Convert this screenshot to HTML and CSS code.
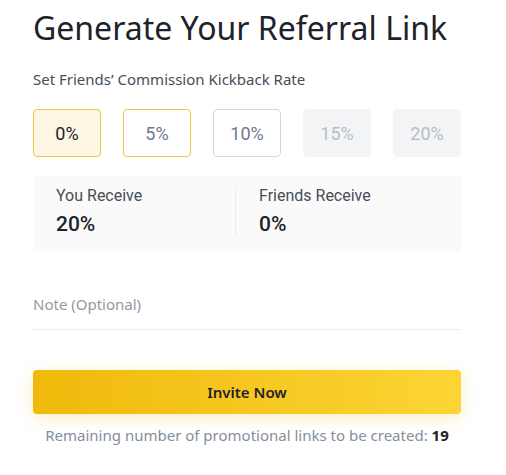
FILE: index.html
```html
<!DOCTYPE html>
<html lang="en">
<head>
  <meta charset="UTF-8">
  <title>Generate Your Referral Link</title>
  <link rel="stylesheet" href="styles.css">
</head>
<body>
  <div class="panel">
    <h1 class="title">Generate Your Referral Link</h1>
    <p class="label">Set Friends’ Commission Kickback Rate</p>

    <div class="rates">
      <button class="rate active">0%</button>
      <button class="rate open">5%</button>
      <button class="rate">10%</button>
      <button class="rate off">15%</button>
      <button class="rate off">20%</button>
    </div>

    <div class="split">
      <div class="split-col first">
        <div class="split-label">You Receive</div>
        <div class="split-value">20%</div>
      </div>
      <div class="split-col">
        <div class="split-label">Friends Receive</div>
        <div class="split-value">0%</div>
      </div>
    </div>

    <input class="note" type="text" placeholder="Note (Optional)">

    <button class="invite">Invite Now</button>
    <p class="remain">Remaining number of promotional links to be created: <b>19</b></p>
  </div>
</body>
</html>
```

FILE: styles.css
```css
body { margin: 0; background: #fff; font-family: "Noto Sans", "Liberation Sans", sans-serif; color: #1e2329; }
.panel { width: 428px; padding: 6px 0 0 33px; }
.title { font-size: 32px; font-weight: 400; margin: 0; line-height: 44px; color: #1e2329; }
.label { font-size: 15px; color: #474d57; margin: 19px 0 0; line-height: 20px; }

.rates { display: flex; gap: 22px; margin-top: 20px; }
.rate {
  width: 68px; height: 48px; border: 1px solid #d5d8dc; border-radius: 4px; background: #fff;
  font-family: Roboto, sans-serif; font-size: 18px; color: #707a8a; padding: 0;
}
.rate.active { background: #fdf6e3; border-color: #f0c343; color: #1e2329; }
.rate.open { border-color: #f0c343; }
.rate.off { background: #f3f4f5; border-color: #f3f4f5; color: #b7bdc6; }

.split { display: flex; background: #fafafa; margin-top: 19px; padding: 10px 0 14px; }
.split-col { flex: 1; padding: 0 23px; }
.split-col.first { flex: 0 0 203px; box-sizing: border-box; border-right: 1px solid #eaecef; }
.split-label { font-family: Roboto, sans-serif; font-size: 16px; color: #474d57; line-height: 20px; }
.split-value { font-family: Roboto, sans-serif; font-size: 21px; font-weight: 500; margin-top: 5px; line-height: 26px; }

.note {
  display: block; width: 100%; box-sizing: border-box; margin-top: 43px; padding: 0 0 15px;
  border: 0; border-bottom: 1px solid #eaecef; font-family: inherit; font-size: 15px; outline: none;
}
.note::placeholder { color: #929aa5; }

.invite {
  display: block; width: 100%; height: 44px; margin-top: 40px; border: 0; border-radius: 4px;
  background: linear-gradient(90deg, #f0b90b, #fcd535); font-family: inherit; font-size: 15px; font-weight: 600;
  color: #1e2329; box-shadow: 0 4px 16px rgba(240, 185, 11, 0.25);
}
.remain { text-align: center; font-size: 15px; color: #848e9c; margin: 11px 0 0; }
.remain b { color: #1e2329; }
```
